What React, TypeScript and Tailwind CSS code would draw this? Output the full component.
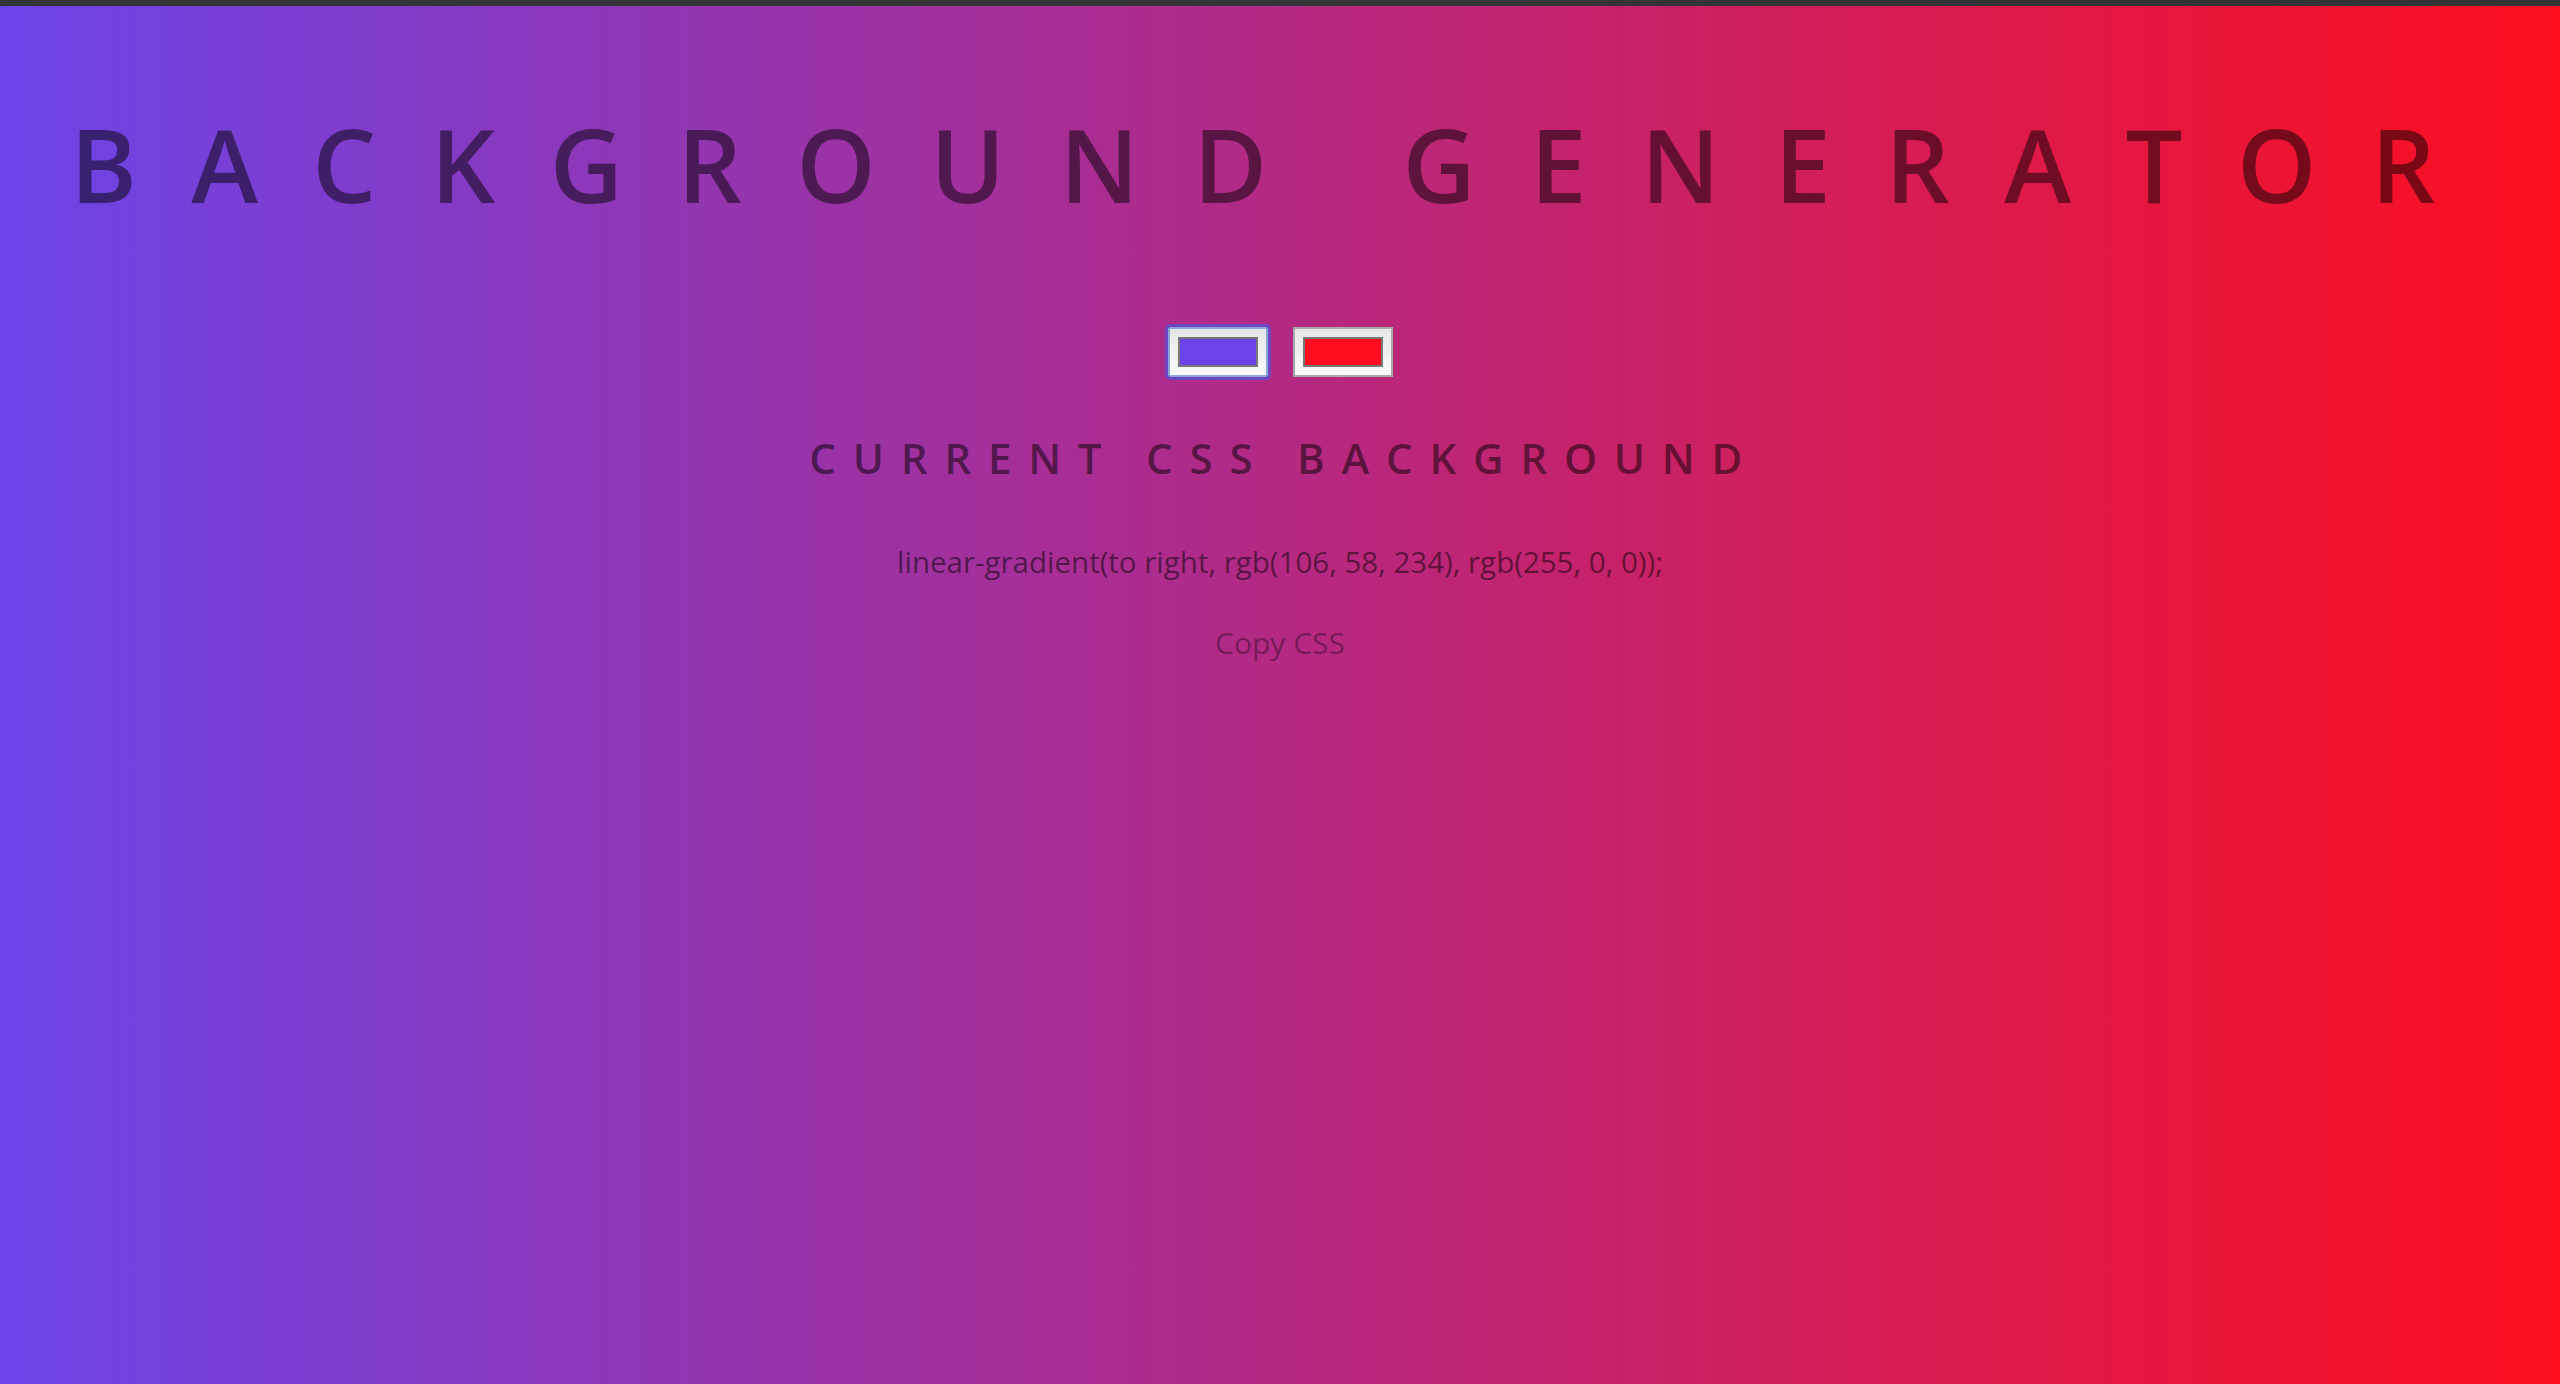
import { useState } from "react";

const font = { fontFamily: '"Open Sans", "Noto Sans", sans-serif' };

function Swatch({ color, focused }: { color: string; focused?: boolean }) {
  return (
    <div
      className={[
        "w-[100px] h-[50px] p-[8px] border-2 bg-[linear-gradient(to_bottom,#e6e6e6,#f9f9f9)]",
        focused
          ? "border-[#8aa6d8] rounded-[2px] outline-[3px] outline-solid outline-[#5a4fd0]/80"
          : "border-[#a9a9a9]",
      ].join(" ")}
    >
      <div className="w-full h-full border-2 border-[#777777]" style={{ background: color }} />
    </div>
  );
}

export default function App() {
  const [c1] = useState("#6b44e8");
  const [c2] = useState("#fc0e1e");
  const css = `linear-gradient(to right, rgb(106, 58, 234), rgb(255, 0, 0));`;

  return (
    <div className="min-h-screen flex flex-col" style={font}>
      <div className="h-[6px] bg-[#323436]" />
      <div className="flex-1 min-h-[1378px] bg-[linear-gradient(to_right,#6b44e8,#fc0e1e)] text-center text-black/50">
        <h1 className="pt-[108px] text-[101px] leading-none font-semibold uppercase tracking-[0.539em]">
          Background Generator
        </h1>

        <div className="mt-[112px] flex justify-center gap-[25px]">
          <Swatch color={c1} focused />
          <Swatch color={c2} />
        </div>

        <h3 className="mt-[60px] text-[42px] leading-none font-semibold uppercase tracking-[0.4em] pl-[0.2em]">
          Current CSS Background
        </h3>

        <p className="mt-[68px] text-[29.5px] leading-none">{css}</p>

        <button className="mt-[51px] text-[30px] leading-none text-black/35 bg-transparent">
          Copy CSS
        </button>
      </div>
    </div>
  );
}
